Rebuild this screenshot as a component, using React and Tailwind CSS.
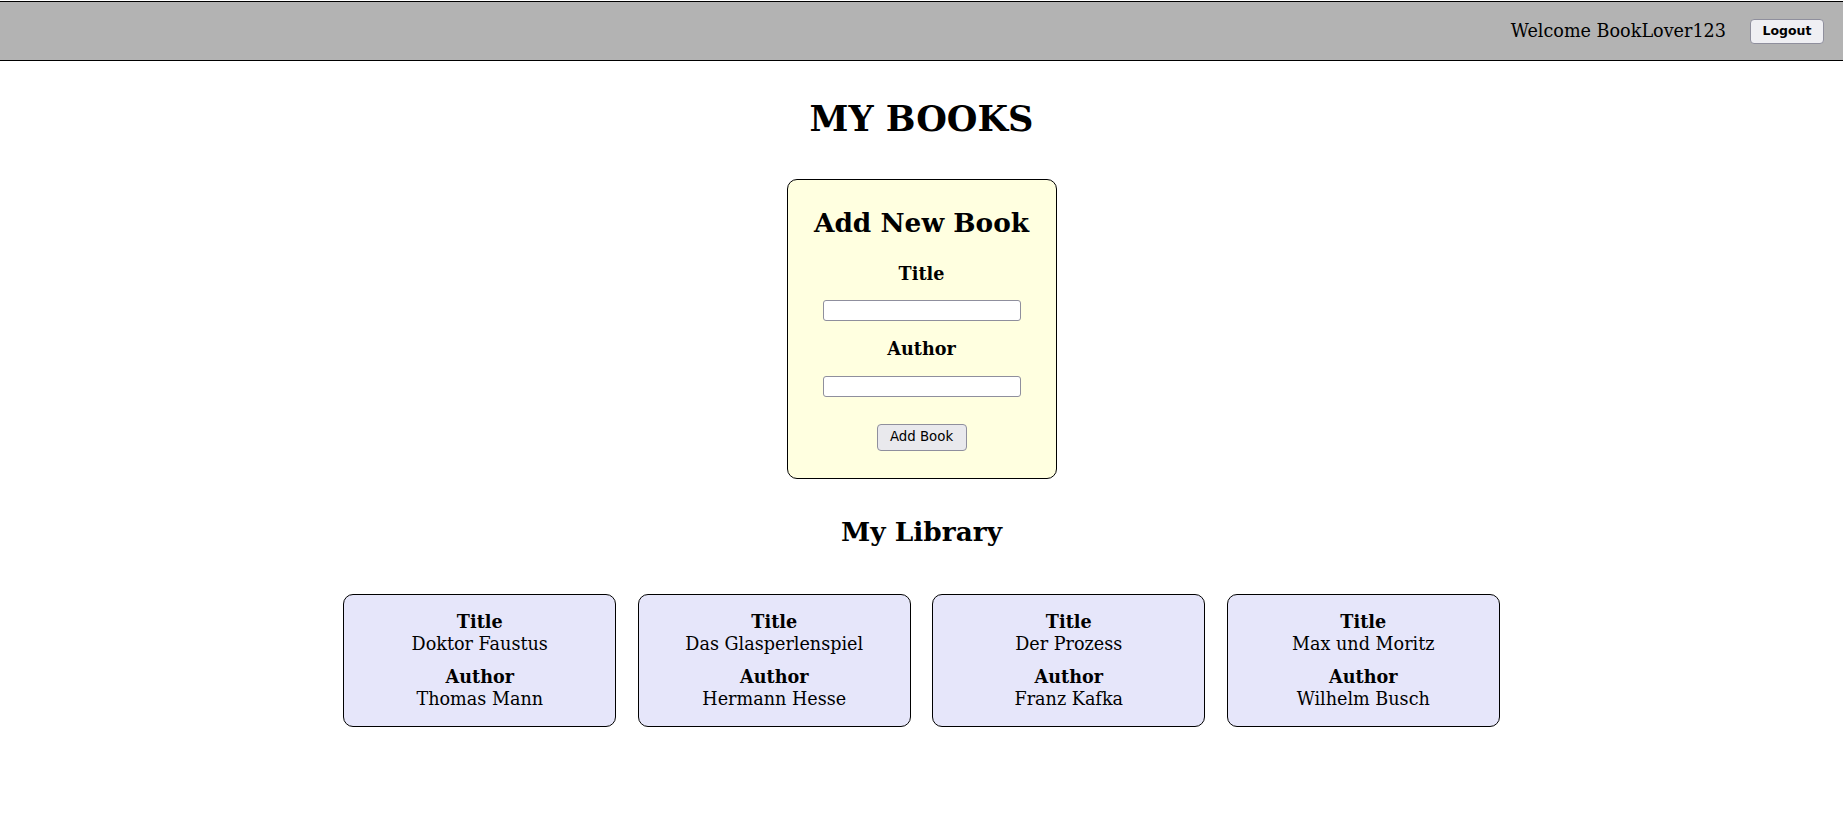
const books = [
    { title: 'Doktor Faustus', author: 'Thomas Mann' },
    { title: 'Das Glasperlenspiel', author: 'Hermann Hesse' },
    { title: 'Der Prozess', author: 'Franz Kafka' },
    { title: 'Max und Moritz', author: 'Wilhelm Busch' },
];

export default function App() {
    return (
        <div className="min-h-screen bg-white text-black font-['DejaVu_Serif',serif] text-[17.6px]">
            {/* Header */}
            <header className="h-[60px] mt-px border-y border-black bg-[#b3b3b3] flex items-center justify-end pr-[19px]">
                <span className="mr-[24px]">Welcome BookLover123</span>
                <button className="w-[74px] h-[25px] rounded-[4px] border border-[#8f8f9d] bg-[#efeff3] text-[12.5px] font-bold font-['DejaVu_Sans',sans-serif]">
                    Logout
                </button>
            </header>

            <h1 className="mt-[40px] text-center text-[35.2px] font-bold leading-none">MY BOOKS</h1>

            {/* Add form */}
            <div className="mx-auto mt-[43px] w-[270px] h-[300px] rounded-[10px] border border-black bg-[#ffffe0] flex flex-col items-center pt-[30px]">
                <h2 className="text-[26.4px] font-bold leading-none">Add New Book</h2>
                <label className="mt-[28px] font-bold leading-none">Title</label>
                <input type="text" className="mt-[18px] w-[198px] h-[21px] rounded-[3px] border border-[#8f8f9d] bg-white" />
                <label className="mt-[19px] font-bold leading-none">Author</label>
                <input type="text" className="mt-[18px] w-[198px] h-[21px] rounded-[3px] border border-[#8f8f9d] bg-white" />
                <button className="mt-[27px] w-[90px] h-[27px] rounded-[4px] border border-[#8f8f9d] bg-[#e9e9ed] text-[13.33px] font-['DejaVu_Sans',sans-serif]">
                    Add Book
                </button>
            </div>

            <h2 className="mt-[40px] text-center text-[26.4px] font-bold leading-none">My Library</h2>

            {/* Library */}
            <div className="mt-[48px] flex justify-center gap-[21.5px]">
                {books.map((b) => (
                    <div key={b.title} className="w-[273px] h-[133px] rounded-[10px] border border-black bg-[#e6e6fa] flex flex-col items-center pt-[16px] leading-[22px]">
                        <div className="font-bold">Title</div>
                        <div>{b.title}</div>
                        <div className="mt-[11px] font-bold">Author</div>
                        <div>{b.author}</div>
                    </div>
                ))}
            </div>
        </div>
    );
}
